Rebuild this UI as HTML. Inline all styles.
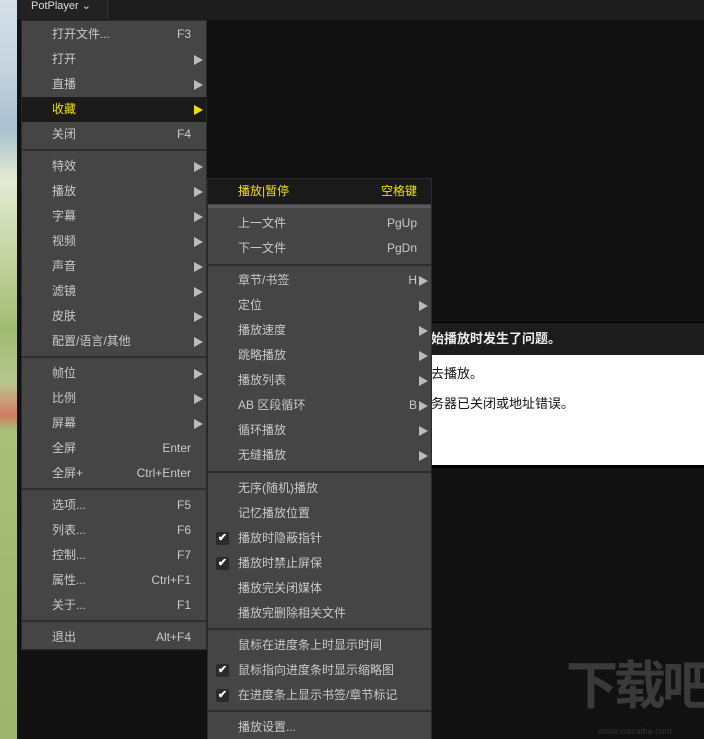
<!DOCTYPE html>
<html><head><meta charset="utf-8"><style>
*{margin:0;padding:0;box-sizing:border-box}
html{width:704px;height:739px;overflow:hidden}
body{width:704px;height:739px;overflow:hidden;background:#111;position:relative;font-family:"Liberation Sans","Noto Sans CJK SC",sans-serif;font-size:12px;color:#c9c9c9}
.strip{position:absolute;left:0;top:0;width:17px;height:739px;background:linear-gradient(#d4dfe8 0,#c8d6e0 60px,#a9c0cf 130px,#e3ebd3 180px,#c4d3a0 260px,#9fba72 330px,#b5c68e 380px,#caa07a 400px,#d07a60 415px,#a8bf7a 430px,#9db46d 739px)}
.top{position:absolute;left:17px;top:0;width:687px;height:20px;background:#1c1c1c}
.tab{position:absolute;left:20px;top:0;width:88px;height:19px;background:#222;border-right:1px solid #333;color:#ddd;font-size:11px;line-height:12px;padding-left:11px}
.menu{position:absolute;background:#454545;border:1px solid #2a2a2a;overflow:hidden}
.it{position:absolute;left:0;right:0;height:25px;line-height:25px;white-space:nowrap}
.it .t{position:absolute;left:30px}
.it .k{position:absolute}
.it .a{position:absolute;top:8px;width:0;height:0;border-top:5px solid transparent;border-bottom:5px solid transparent;border-left:9px solid #bbb}
.hl{background:#1a1a1a;color:#f0e000}
.hl .a{border-left-color:#f0e000}
.sep{position:absolute;left:0;right:0;height:2px;background:#2e2e30}
.ck{position:absolute;left:8px;top:6px;width:13px;height:13px;background:#2a2a30;border-radius:2px;color:#fff;font-size:11px;line-height:13px;text-align:center;font-weight:bold}
.dlg{position:absolute;left:431px;top:322px;width:273px;height:146px;background:#000}
.dh{position:absolute;left:0;top:1px;width:273px;height:32px;background:#1c1c1c;color:#eee;font-weight:bold;font-size:13px;line-height:32px;white-space:nowrap}
.db{position:absolute;left:0;top:33px;width:273px;height:110px;background:#fff;color:#111;font-size:13px;white-space:nowrap}
.wm{position:absolute;left:566px;top:652px;color:#3a3a3a;font-size:52px;font-weight:bold;line-height:70px;letter-spacing:-4px;white-space:nowrap}
.wm2{position:absolute;left:598px;top:726px;color:#333;font-size:9px;white-space:nowrap}
</style></head><body>
<div class="strip"></div>
<div class="top"></div>
<div class="tab">PotPlayer ⌄</div>
<div class="wm">下载吧</div><div class="wm2">www.xiazaiba.com</div>

<div class="dlg">
<div class="dh">始播放时发生了问题。</div>
<div class="db"><div style="position:absolute;top:8px;left:0">去播放。</div><div style="position:absolute;top:38px;left:0">务器已关闭或地址错误。</div></div>
</div>

<div class="menu" style="left:21px;top:20px;width:186px;height:630px">
<div class="it" style="top:1px"><span class="t">打开文件...</span><span class="k" style="right:15px">F3</span></div>
<div class="it" style="top:26px"><span class="t">打开</span><span class="a" style="right:3px"></span></div>
<div class="it" style="top:51px"><span class="t">直播</span><span class="a" style="right:3px"></span></div>
<div class="it hl" style="top:76px"><span class="t">收藏</span><span class="a" style="right:3px"></span></div>
<div class="it" style="top:101px"><span class="t">关闭</span><span class="k" style="right:15px">F4</span></div>
<div class="sep" style="top:128px"></div>
<div class="it" style="top:133px"><span class="t">特效</span><span class="a" style="right:3px"></span></div>
<div class="it" style="top:158px"><span class="t">播放</span><span class="a" style="right:3px"></span></div>
<div class="it" style="top:183px"><span class="t">字幕</span><span class="a" style="right:3px"></span></div>
<div class="it" style="top:208px"><span class="t">视频</span><span class="a" style="right:3px"></span></div>
<div class="it" style="top:233px"><span class="t">声音</span><span class="a" style="right:3px"></span></div>
<div class="it" style="top:258px"><span class="t">滤镜</span><span class="a" style="right:3px"></span></div>
<div class="it" style="top:283px"><span class="t">皮肤</span><span class="a" style="right:3px"></span></div>
<div class="it" style="top:308px"><span class="t">配置/语言/其他</span><span class="a" style="right:3px"></span></div>
<div class="sep" style="top:335px"></div>
<div class="it" style="top:340px"><span class="t">帧位</span><span class="a" style="right:3px"></span></div>
<div class="it" style="top:365px"><span class="t">比例</span><span class="a" style="right:3px"></span></div>
<div class="it" style="top:390px"><span class="t">屏幕</span><span class="a" style="right:3px"></span></div>
<div class="it" style="top:415px"><span class="t">全屏</span><span class="k" style="right:15px">Enter</span></div>
<div class="it" style="top:440px"><span class="t">全屏+</span><span class="k" style="right:15px">Ctrl+Enter</span></div>
<div class="sep" style="top:467px"></div>
<div class="it" style="top:472px"><span class="t">选项...</span><span class="k" style="right:15px">F5</span></div>
<div class="it" style="top:497px"><span class="t">列表...</span><span class="k" style="right:15px">F6</span></div>
<div class="it" style="top:522px"><span class="t">控制...</span><span class="k" style="right:15px">F7</span></div>
<div class="it" style="top:547px"><span class="t">属性...</span><span class="k" style="right:15px">Ctrl+F1</span></div>
<div class="it" style="top:572px"><span class="t">关于...</span><span class="k" style="right:15px">F1</span></div>
<div class="sep" style="top:599px"></div>
<div class="it" style="top:604px"><span class="t">退出</span><span class="k" style="right:15px">Alt+F4</span></div>
</div>

<div class="menu" style="left:207px;top:178px;width:225px;height:561px;border-bottom:none">
<div class="it hl" style="top:0px"><span class="t">播放|暂停</span><span class="k" style="right:14px">空格键</span></div>
<div class="sep" style="top:26px;background:#5a5a5a;height:3px"></div>
<div class="it" style="top:32px"><span class="t">上一文件</span><span class="k" style="right:14px">PgUp</span></div>
<div class="it" style="top:57px"><span class="t">下一文件</span><span class="k" style="right:14px">PgDn</span></div>
<div class="sep" style="top:85px"></div>
<div class="it" style="top:89px"><span class="t">章节/书签</span><span class="k" style="right:14px">H</span><span class="a" style="right:3px"></span></div>
<div class="it" style="top:114px"><span class="t">定位</span><span class="a" style="right:3px"></span></div>
<div class="it" style="top:139px"><span class="t">播放速度</span><span class="a" style="right:3px"></span></div>
<div class="it" style="top:164px"><span class="t">跳略播放</span><span class="a" style="right:3px"></span></div>
<div class="it" style="top:189px"><span class="t">播放列表</span><span class="a" style="right:3px"></span></div>
<div class="it" style="top:214px"><span class="t">AB 区段循环</span><span class="k" style="right:14px">B</span><span class="a" style="right:3px"></span></div>
<div class="it" style="top:239px"><span class="t">循环播放</span><span class="a" style="right:3px"></span></div>
<div class="it" style="top:264px"><span class="t">无缝播放</span><span class="a" style="right:3px"></span></div>
<div class="sep" style="top:292px"></div>
<div class="it" style="top:297px"><span class="t">无序(随机)播放</span></div>
<div class="it" style="top:322px"><span class="t">记忆播放位置</span></div>
<div class="it" style="top:347px"><span class="ck">✔</span><span class="t">播放时隐蔽指针</span></div>
<div class="it" style="top:372px"><span class="ck">✔</span><span class="t">播放时禁止屏保</span></div>
<div class="it" style="top:397px"><span class="t">播放完关闭媒体</span></div>
<div class="it" style="top:422px"><span class="t">播放完删除相关文件</span></div>
<div class="sep" style="top:449px"></div>
<div class="it" style="top:454px"><span class="t">鼠标在进度条上时显示时间</span></div>
<div class="it" style="top:479px"><span class="ck">✔</span><span class="t">鼠标指向进度条时显示缩略图</span></div>
<div class="it" style="top:504px"><span class="ck">✔</span><span class="t">在进度条上显示书签/章节标记</span></div>
<div class="sep" style="top:531px"></div>
<div class="it" style="top:536px"><span class="t">播放设置...</span></div>
</div>
</body></html>
